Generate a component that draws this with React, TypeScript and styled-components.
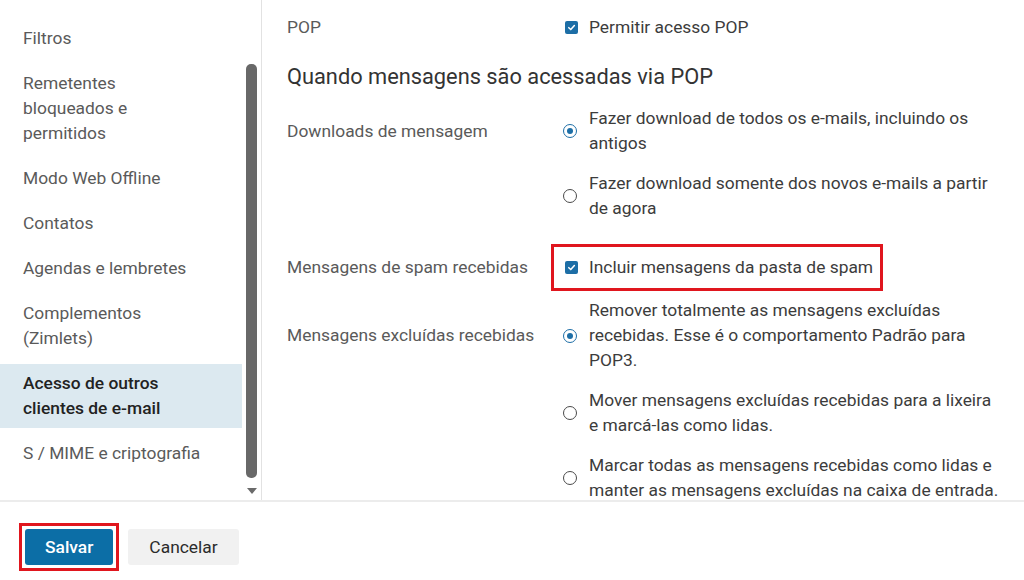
import { FunctionComponent, ReactNode } from "react";
import styled, { createGlobalStyle, css } from "styled-components";

const GlobalStyle = createGlobalStyle`
  html, body {
    margin: 0;
    padding: 0;
    background: #fff;
  }
  body {
    font-family: Roboto, "Liberation Sans", Arial, sans-serif;
  }
`;

const redFrame = (offset: number) => css`
  position: relative;
  &::after {
    content: "";
    position: absolute;
    inset: -${offset}px;
    border: 3px solid #e0161e;
    pointer-events: none;
  }
`;

const Page = styled.div`
  width: 1024px;
  height: 580px;
  display: flex;
  flex-direction: column;
  overflow: hidden;
  background: #fff;
`;

const Body = styled.div`
  height: 500px;
  display: flex;
`;

const Sidebar = styled.aside`
  width: 261px;
  flex-shrink: 0;
  display: flex;
  border-right: 1px solid #e2e2e2;
`;

const NavList = styled.ul`
  list-style: none;
  margin: 0;
  padding: 19px 0 0;
  width: 242px;
  display: flex;
  flex-direction: column;
  gap: 6px;
`;

const NavItem = styled.li<{ $active?: boolean }>`
  padding: 7px 0 7px 23px;
  font-size: 17.4px;
  line-height: 25px;
  color: ${(p) => (p.$active ? "#222" : "#5a5a5a")};
  font-weight: ${(p) => (p.$active ? 500 : 400)};
  background: ${(p) => (p.$active ? "#dce9f0" : "transparent")};
`;

const ScrollTrack = styled.div`
  flex: 1;
  display: flex;
  flex-direction: column;
  align-items: center;
  padding-top: 64px;
`;

const ScrollThumb = styled.div`
  width: 11px;
  height: 414px;
  background: #686868;
  border-radius: 5px;
`;

const ScrollArrow = styled.div`
  margin-top: 10px;
  width: 0;
  height: 0;
  border-left: 5px solid transparent;
  border-right: 5px solid transparent;
  border-top: 6px solid #6a6a6a;
`;

const Main = styled.main`
  flex: 1;
  overflow: hidden;
  padding: 15px 0 0 25px;
`;

const FormRow = styled.div<{ $gap: number }>`
  display: grid;
  grid-template-columns: 276px 1fr;
  row-gap: 15px;
  margin-top: ${(p) => p.$gap}px;
`;

const Label = styled.div`
  grid-column: 1;
  grid-row: 1;
  align-self: center;
  font-size: 17.4px;
  line-height: 25px;
  color: #5a5a5a;
`;

const Heading = styled.h2`
  margin: 23px 0 0;
  font-size: 21.8px;
  line-height: 28px;
  font-weight: 400;
  color: #333;
`;

const Option = styled.label<{ $highlight?: boolean }>`
  grid-column: 2;
  display: flex;
  align-items: center;
  width: fit-content;
  ${(p) => p.$highlight && redFrame(11)}
  ${(p) =>
    p.$highlight &&
    css`
      &::after {
        left: -12px;
        right: -10px;
      }
    `}
`;

const ControlSlot = styled.span`
  width: 26px;
  flex-shrink: 0;
  display: flex;
  align-items: center;
`;

const OptionText = styled.span`
  max-width: 411px;
  font-size: 17.4px;
  line-height: 25px;
  color: #3c3c3c;
`;

const Checkbox = styled.span`
  margin-left: 2px;
  width: 13px;
  height: 13px;
  border-radius: 2px;
  background: #1d6ea6;
  display: flex;
  align-items: center;
  justify-content: center;
`;

const Radio = styled.span<{ $checked?: boolean }>`
  box-sizing: border-box;
  width: 14px;
  height: 14px;
  border-radius: 50%;
  border: 1.5px solid ${(p) => (p.$checked ? "#1d6ea6" : "#4a4a4a")};
  display: flex;
  align-items: center;
  justify-content: center;
  &::after {
    content: "";
    width: 6px;
    height: 6px;
    border-radius: 50%;
    background: ${(p) => (p.$checked ? "#1d6ea6" : "transparent")};
  }
`;

const Footer = styled.footer`
  flex: 1;
  border-top: 2px solid #ececec;
  display: flex;
  align-items: center;
  gap: 15px;
  padding: 12px 0 0 25px;
`;

const Button = styled.button<{ $primary?: boolean }>`
  height: 36px;
  padding: 0 ${(p) => (p.$primary ? 20 : 21)}px;
  border: none;
  border-radius: 3px;
  font-family: Roboto, "Liberation Sans", Arial, sans-serif;
  font-size: 17.4px;
  font-weight: ${(p) => (p.$primary ? 500 : 400)};
  color: ${(p) => (p.$primary ? "#fff" : "#2b2b2b")};
  background: ${(p) => (p.$primary ? "#0c6ea6" : "#f1f1f1")};
  ${(p) => p.$primary && redFrame(6)}
`;

const CheckMark = () => (
  <svg width="9" height="9" viewBox="0 0 10 10">
    <path d="M2 5.2 L4.2 7.3 L8.2 2.8" fill="none" stroke="#fff" strokeWidth="1.7" strokeLinecap="round" strokeLinejoin="round" />
  </svg>
);

type ChoiceProps = {
  kind: "checkbox" | "radio";
  checked?: boolean;
  highlight?: boolean;
  children: ReactNode;
};

const Choice: FunctionComponent<ChoiceProps> = ({ kind, checked, highlight, children }) => (
  <Option $highlight={highlight}>
    <ControlSlot>
      {kind === "checkbox" ? (
        <Checkbox>
          <CheckMark />
        </Checkbox>
      ) : (
        <Radio $checked={checked} />
      )}
    </ControlSlot>
    <OptionText>{children}</OptionText>
  </Option>
);

const navItems: { lines: string[]; active?: boolean }[] = [
  { lines: ["Filtros"] },
  { lines: ["Remetentes", "bloqueados e", "permitidos"] },
  { lines: ["Modo Web Offline"] },
  { lines: ["Contatos"] },
  { lines: ["Agendas e lembretes"] },
  { lines: ["Complementos", "(Zimlets)"] },
  { lines: ["Acesso de outros", "clientes de e-mail"], active: true },
  { lines: ["S / MIME e criptografia"] },
];

export default function App() {
  return (
    <Page>
      <GlobalStyle />
      <Body>
        <Sidebar>
          <NavList>
            {navItems.map((item) => (
              <NavItem key={item.lines[0]} $active={item.active}>
                {item.lines.map((line, i) => (
                  <span key={line}>
                    {i > 0 && <br />}
                    {line}
                  </span>
                ))}
              </NavItem>
            ))}
          </NavList>
          <ScrollTrack>
            <ScrollThumb />
            <ScrollArrow />
          </ScrollTrack>
        </Sidebar>

        <Main>
          <FormRow $gap={0}>
            <Label>POP</Label>
            <Choice kind="checkbox" checked>
              Permitir acesso POP
            </Choice>
          </FormRow>

          <Heading>Quando mensagens são acessadas via POP</Heading>

          <FormRow $gap={15}>
            <Label>Downloads de mensagem</Label>
            <Choice kind="radio" checked>
              Fazer download de todos os e-mails, incluindo os antigos
            </Choice>
            <Choice kind="radio">Fazer download somente dos novos e-mails a partir de agora</Choice>
          </FormRow>

          <FormRow $gap={34}>
            <Label>Mensagens de spam recebidas</Label>
            <Choice kind="checkbox" checked highlight>
              Incluir mensagens da pasta de spam
            </Choice>
          </FormRow>

          <FormRow $gap={18}>
            <Label>Mensagens excluídas recebidas</Label>
            <Choice kind="radio" checked>
              Remover totalmente as mensagens excluídas recebidas. Esse é o comportamento Padrão para POP3.
            </Choice>
            <Choice kind="radio">Mover mensagens excluídas recebidas para a lixeira e marcá-las como lidas.</Choice>
            <Choice kind="radio">
              Marcar todas as mensagens recebidas como lidas e manter as mensagens excluídas na caixa de entrada.
            </Choice>
          </FormRow>
        </Main>
      </Body>

      <Footer>
        <Button $primary>Salvar</Button>
        <Button>Cancelar</Button>
      </Footer>
    </Page>
  );
}
